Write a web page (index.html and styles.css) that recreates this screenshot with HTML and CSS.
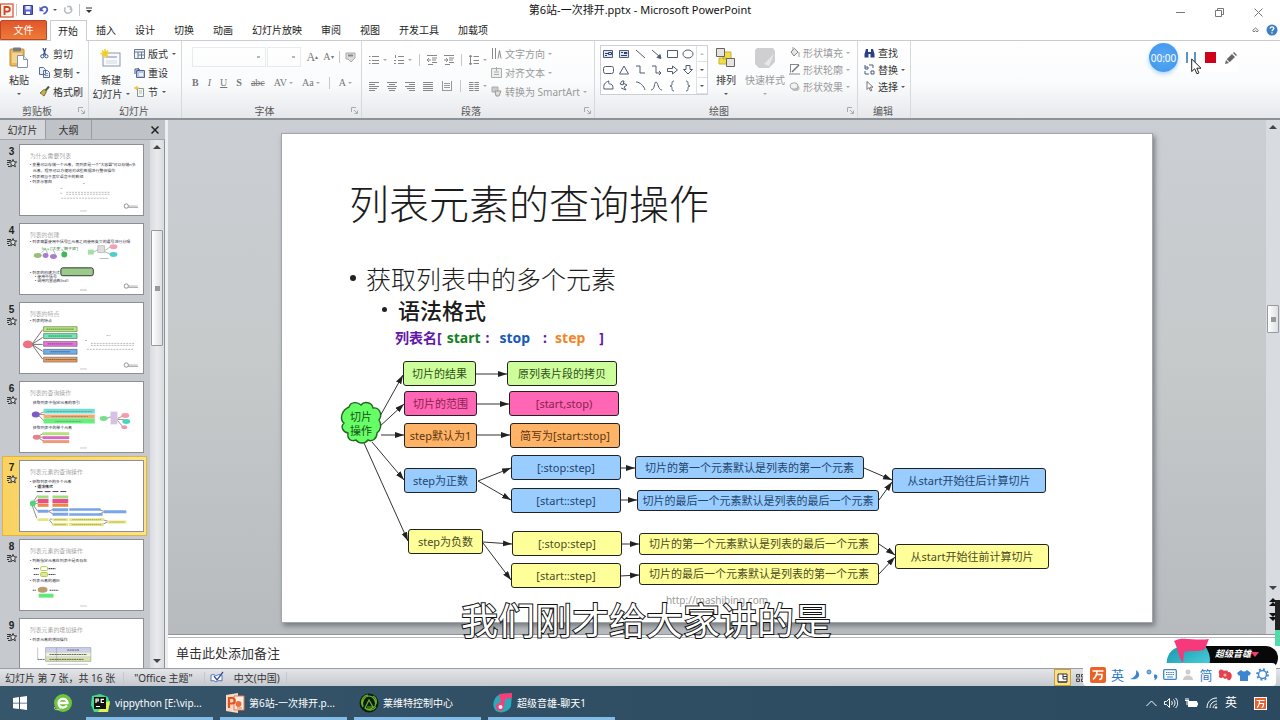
FILE: index.html
```html
<!DOCTYPE html>
<html lang="zh-CN">
<head>
<meta charset="utf-8">
<meta name="viewport" content="width=device-width, initial-scale=1">
<title>第6站-一次排开.pptx - Microsoft PowerPoint</title>
<link rel="stylesheet" href="styles.css">
</head>
<body>
<svg class="defs" aria-hidden="true">
  <symbol id="star" viewBox="0 0 10 9"><path d="M0 1.500h4M0 3.500h3M0 5.500h2M1 7.500h2" stroke="#333" fill="none"/><path d="M6 .5l1 2.300 2.600.2-2 1.800.7 3L6 6.300 3.700 7.800l.7-3-2-1.800L5 2.800z" fill="#ddd" stroke="#222" stroke-width=".9"/></symbol>
  <symbol id="launch" viewBox="0 0 7 7"><path d="M.5 5V.5H5M3 3l3 3M6.500 3.500v3h-3" fill="none" stroke="#aaa"/></symbol>
  <symbol id="logo" viewBox="0 0 16 6"><circle cx="3" cy="3" r="2.200" fill="none" stroke="#777" stroke-width=".8"/><path d="M5 4.500h10M5.500 3h9" stroke="#999" stroke-width=".8"/></symbol>
</svg>

<header class="titlebar">
  <div class="quick">
    <svg width="14" height="15" viewBox="0 0 14 15"><rect x=".5" y="1" width="12.500" height="13" fill="#fff4ef" stroke="#d0532f" stroke-width="1.200"/><path d="M4.500 12V4h3a2.200 2.200 0 010 4.700h-3" fill="none" stroke="#cf4420" stroke-width="1.800"/></svg>
    <i class="bar"></i>
    <button aria-label="保存"><svg width="10" height="10" viewBox="0 0 10 10"><path d="M.5.5h9v9h-9z" fill="#5a64c8" stroke="#3a3f95"/><path d="M2.500 1h5v3.500h-5z" fill="#e9ecff"/><path d="M3 6.500h4V9H3z" fill="#fff"/></svg></button>
    <button class="undo" aria-label="撤消"><svg width="10" height="10" viewBox="0 0 10 10"><path d="M2 4.500C3.500 1 8.500 1 8.300 4.600 8 7 6.500 8 4.500 9" fill="none" stroke="#4d5cc9" stroke-width="1.800"/><path d="M.5 1.500v4.800h4.700z" fill="#4d5cc9"/></svg><i class="dd"></i></button>
    <button aria-label="重复"><svg width="10" height="10" viewBox="0 0 10 10"><path d="M7.500 2a3.600 3.600 0 11-5 .3M7.500 5V1.500H4" fill="none" stroke="#b9bcc2" stroke-width="1.500"/></svg></button>
    <i class="bar"></i>
    <button aria-label="自定义快速访问工具栏"><svg width="6" height="7" viewBox="0 0 6 7"><path d="M0 1h6" stroke="#333"/><path d="M0 3h6L3 6z" fill="#333"/></svg></button>
  </div>
  <h1 class="wtitle">第6站-一次排开.pptx - Microsoft PowerPoint</h1>
  <div class="winbtns">
    <button aria-label="最小化"><svg width="9" height="9" viewBox="0 0 9 9"><path d="M0 4.500h9" stroke="#777"/></svg></button>
    <button aria-label="还原"><svg width="9" height="9" viewBox="0 0 9 9"><path d="M.5 2.500h6v6h-6zM2.500 2.500v-2h6v6h-2" fill="none" stroke="#777"/></svg></button>
    <button aria-label="关闭"><svg width="9" height="9" viewBox="0 0 9 9"><path d="M.5.5l8 8M8.500.5l-8 8" stroke="#777"/></svg></button>
  </div>
</header>

<nav class="tabs">
  <button class="file">文件</button>
  <button class="on">开始</button><button>插入</button><button>设计</button><button>切换</button><button>动画</button><button>幻灯片放映</button><button>审阅</button><button>视图</button><button>开发工具</button><button>加载项</button>
  <span class="help">
    <button aria-label="折叠功能区"><svg width="7" height="6" viewBox="0 0 7 6"><path d="M.7 3.500L3.500 1l2.800 2.500L5 5 3.500 3.600 2 5z" fill="#fff" stroke="#555" stroke-width=".8"/></svg></button>
    <button aria-label="帮助"><svg width="12" height="12" viewBox="0 0 12 12"><circle cx="6" cy="6" r="5.500" fill="#3f7fc0"/><path d="M4.200 4.600c0-2.300 3.700-2.200 3.600 0C7.800 5.700 6 5.800 6 7.300M6 8.300v1.200" fill="none" stroke="#fff" stroke-width="1.300"/></svg></button>
  </span>
</nav>

<section class="ribbon" aria-label="开始">
  <div class="group g-clip">
    <div class="gbody">
      <button class="big"><svg width="20" height="22" viewBox="0 0 20 22"><rect x="1" y="2" width="14" height="17" rx="1" fill="#e8b95a" stroke="#b98a36"/><rect x="4" y="0.500" width="8" height="4" rx="1" fill="#777b80"/><path d="M3 6h10v10H3z" fill="#f3d38e"/><path d="M8.500 8.500h6l4 4v8h-10z" fill="#fff" stroke="#7f93b8"/><path d="M14.500 8.500v4h4" fill="#dce6f6" stroke="#7f93b8"/></svg><span>粘贴</span><i class="dd"></i></button>
      <div class="stack">
        <button><svg width="11" height="11" viewBox="0 0 11 11"><path d="M4 0l2.500 7M7 0L4.500 7" stroke="#35518c" stroke-width="1.300"/><circle cx="3.300" cy="8.300" r="1.600" fill="none" stroke="#35518c"/><circle cx="7.400" cy="8.300" r="1.600" fill="none" stroke="#35518c"/></svg>剪切</button>
        <button><svg width="11" height="11" viewBox="0 0 11 11"><path d="M.5.500h4l2 2v5h-6zM4.500 3.500h4l2 2v5h-6z" fill="#eef3fb" stroke="#566c97"/><path d="M6 6.500h3M6 8.500h3" stroke="#7b95c4"/></svg>复制<i class="dd"></i></button>
        <button><svg width="11" height="11" viewBox="0 0 11 11"><path d="M10 .5L6.500 4.500" stroke="#4a5c3a" stroke-width="2"/><path d="M1 7l4-3.500 2.500 2L5 10C3 9.500 4 8 1 7z" fill="#c7b24b" stroke="#766f33"/></svg>格式刷</button>
      </div>
    </div>
    <div class="glabel">剪贴板<button class="launch" aria-label="剪贴板选项"><svg width="7" height="7"><use href="#launch"/></svg></button></div>
  </div>
  <div class="group g-slides">
    <div class="gbody">
      <button class="big"><svg width="22" height="20" viewBox="0 0 22 20"><rect x="3" y="4" width="17" height="13" fill="#f8fafd" stroke="#8c97ab"/><path d="M6 8h11" stroke="#b9c3d6" stroke-width="2"/><path d="M6 12h11M6 14h11" stroke="#d2d9e6"/><path d="M5 0v9M.5 4.500h9M2 1.500l6 6M8 1.500l-6 6" stroke="#f2cf28" stroke-width="1.500"/></svg><span>新建</span><span class="inl">幻灯片<i class="dd"></i></span></button>
      <div class="stack">
        <button><svg width="11" height="10" viewBox="0 0 11 10"><path d="M.5.500h10v9H.5zM.5 3h10M4 3v6.500M7.500 3v6.500M4 6h6.500" fill="#f3f6fa" stroke="#6b7993"/></svg>版式<i class="dd"></i></button>
        <button><svg width="11" height="10" viewBox="0 0 11 10"><path d="M2.500 2.500h8v7h-8z" fill="#b8c7df" stroke="#55688f"/><path d="M1 6V1h4M3.500 0L5.500 1.500 3.500 3" fill="none" stroke="#35518c"/><path d="M5 5h4v3H5z" fill="#edf2fa"/></svg>重设</button>
        <button><svg width="11" height="11" viewBox="0 0 11 11"><path d="M3.500 2.500h6v8h-6z" fill="#f6f6f2" stroke="#8d929c"/><path d="M5 5h3M5 7h3" stroke="#9ca"/><path d="M0 2h5M2.500 0v4" stroke="#edc93a" stroke-width="1.500"/></svg>节<i class="dd"></i></button>
      </div>
    </div>
    <div class="glabel">幻灯片</div>
  </div>
  <div class="group g-font off">
    <div class="gbody rows">
      <div class="row"><select class="fontname" aria-label="字体" disabled><option></option></select><select class="fontsize" aria-label="字号" disabled><option></option></select><button class="ser big-a">A<sup>▴</sup></button><button class="ser">A<sup>▾</sup></button><i class="bar"></i><button aria-label="清除格式"><svg width="11" height="11" viewBox="0 0 11 11"><path d="M1 1h9v5l-4 4-3-3H1z" fill="#ddd" stroke="#aaa"/><path d="M3 3.500h5" stroke="#888" stroke-width="2"/></svg></button></div>
      <div class="row marks"><button class="ser b">B</button><button class="ser it">I</button><button class="ser u">U</button><button class="ser b">S</button><button class="ser st">abc</button><button class="ser">AV<i class="dd"></i></button><button class="ser">Aa<i class="dd"></i></button><i class="bar"></i><button class="ser">A<i class="dd"></i></button></div>
    </div>
    <div class="glabel">字体<button class="launch" aria-label="字体选项"><svg width="7" height="7"><use href="#launch"/></svg></button></div>
  </div>
  <div class="group g-para off">
    <div class="gbody">
      <div class="rows">
        <div class="row">
          <button aria-label="项目符号"><svg width="10" height="10" viewBox="0 0 10 10"><path d="M3 1.500h7M3 5.500h7M3 8.500h7M0 1.500h1.500M0 5.500h1.500M0 8.500h1.500" stroke="#888"/></svg><i class="dd"></i></button>
          <button aria-label="编号"><svg width="10" height="10" viewBox="0 0 10 10"><path d="M4 1.500h6M4 5.500h6M4 8.500h6M1.500 0v3M0 5.500h2M0 8.500h2" stroke="#888"/></svg><i class="dd"></i></button>
          <i class="bar"></i>
          <button aria-label="减少缩进"><svg width="10" height="10" viewBox="0 0 10 10"><path d="M0 .5h10M5 3h5M5 5h4M5 7.500h5M1 9.500h5M4 5H0M2 3L0 5l2 2" stroke="#888" fill="none"/></svg></button>
          <button aria-label="增加缩进"><svg width="10" height="10" viewBox="0 0 10 10"><path d="M0 .5h10M5 3h5M5 5h4M5 7.500h5M1 9.500h5M0 5h4M2 3l2 2-2 2" stroke="#888" fill="none"/></svg></button>
          <i class="bar"></i>
          <button aria-label="行距"><svg width="10" height="10" viewBox="0 0 10 10"><path d="M4.500 1.500H10M4.500 5.500H10M4.500 8.500H10M1.500.500v9M0 2l1.500-2L3 2M0 8l1.500 2L3 8" stroke="#888" fill="none"/></svg><i class="dd"></i></button>
        </div>
        <div class="row">
          <button aria-label="左对齐"><svg width="10" height="9" viewBox="0 0 10 9"><path d="M0 .5h10M0 2.500h6M0 4.500h10M0 6.500h8M0 8.500h6" stroke="#888"/></svg></button>
          <button aria-label="居中"><svg width="10" height="9" viewBox="0 0 10 9"><path d="M0 .5h10M2 2.500h6M0 4.500h10M1 6.500h8M2 8.500h6" stroke="#888"/></svg></button>
          <button aria-label="右对齐"><svg width="10" height="9" viewBox="0 0 10 9"><path d="M0 .5h10M4 2.500h6M0 4.500h10M2 6.500h8M4 8.500h6" stroke="#888"/></svg></button>
          <button aria-label="两端对齐"><svg width="10" height="9" viewBox="0 0 10 9"><path d="M0 .5h10M0 2.500h10M0 4.500h10M0 6.500h10M0 8.500h10" stroke="#888"/></svg></button>
          <button aria-label="分散对齐"><svg width="10" height="10" viewBox="0 0 10 10"><path d="M.5 0v9M9.500 0v9M2 2.500h6M2 4.500h6M2 6.500h6M0 9.500h10" stroke="#999"/></svg></button>
          <i class="bar"></i>
          <button aria-label="分栏"><svg width="10" height="9" viewBox="0 0 10 9"><path d="M0 .5h4.500M5.500.5H10M0 2.500h4.500M5.500 2.500H10M0 4.500h4.500M5.500 4.500H10M0 6.500h4.500M5.500 6.500H10M0 8.500h4.500M5.500 8.500H10" stroke="#888"/></svg><i class="dd"></i></button>
        </div>
      </div>
      <div class="stack">
        <button><svg width="11" height="11" viewBox="0 0 11 11"><path d="M1.500 0v11M4.500 0v11M7 10.500l1.500-8 1.500 8" stroke="#888" fill="none"/></svg>文字方向<i class="dd"></i></button>
        <button><svg width="11" height="11" viewBox="0 0 11 11"><path d="M.5 1.500h10v9H.5zM3 5h5M3 7.500h5M5.500 0v4" stroke="#aaa" fill="#eee"/></svg>对齐文本<i class="dd"></i></button>
        <button><svg width="11" height="11" viewBox="0 0 11 11"><path d="M1 1h6v5H1z" fill="#ccc" stroke="#aaa"/><path d="M4 5h6l-2 5H5z" fill="#ddd" stroke="#999"/></svg>转换为 SmartArt<i class="dd"></i></button>
      </div>
    </div>
    <div class="glabel">段落<button class="launch" aria-label="段落选项"><svg width="7" height="7"><use href="#launch"/></svg></button></div>
  </div>
  <div class="group g-draw">
    <div class="gbody">
      <div class="shapes">
        <svg width="95" height="50" viewBox="0 0 95 50" fill="none" stroke="#4f5b73" role="img" aria-label="形状"><path d="M2.500 4.500h9v7h-9z" fill="#dfe6f2"/><path d="M4 9.500h2M4 7.500h3M7.500 6.500h3v2h-3z" stroke="#29406f"/><path d="M18.500 4.500h9v7h-9z" fill="#dfe6f2"/><path d="M20 6.500h2M23 6.500h3v1h-3M20 9.500h6" stroke="#29406f"/><path d="M35 4l9 8M51 4l8 7"/><path d="M60 12.500l-4-1 3-3z" fill="#4f5b73"/><path d="M66.500 4.500h10v7h-10z"/><ellipse cx="87" cy="8" rx="5" ry="4"/>
        <rect x="2.500" y="20.500" width="10" height="7" rx="2"/><path d="M23 20l4.500 8h-9zM35 20h4v7h5M51 20h4v7h5M58 25l2 2-2 2M66.500 22.500h5v-2.500l5 4-5 4v-2.500h-5zM85 19.500h4v4h2.500L87 28l-4.500-4.500H85z"/>
        <path d="M3 43c-1-4 1-7 5-8-1 3 0 3 2 3 2 1 2 3 2 5zM21 35l-2 3 3 1 1-4zM22 37l4 2-3 2 2 3-5-2M35 36c4 0 8 4 9 8M50 44c4 0 3-8 5-8s2 8 6 8M73 35c-4 0 0 5-4 5 4 0 0 5 4 5M85 35c4 0 0 5 4 5-4 0 0 5-4 5"/></svg>
        <div class="spin"><button aria-label="上一行"><i class="ua"></i></button><button aria-label="下一行"><i class="dd"></i></button><button aria-label="其他"><i class="dd"></i></button></div>
      </div>
      <button class="big arr"><svg width="22" height="22" viewBox="0 0 22 22"><path d="M8 5h8v7H8zM4 11h8v6H4z" fill="#f1dc4d" stroke="#c9b22a"/><path d="M1.500 1.500h8v8h-8zM11.500 11.500h8v8h-8z" fill="#e4e4e6" stroke="#6a6358"/></svg><span>排列</span><i class="dd"></i></button>
      <button class="big off qs"><svg width="22" height="22" viewBox="0 0 22 22"><path d="M3 1h16l2 3v11l-6 6H5l-4-4V3z" fill="#cfcfd1"/><path d="M10 17L20 7l-5 12z" fill="#e8e8e8"/></svg><span>快速样式</span><i class="dd"></i></button>
      <div class="stack tight off">
        <button><svg width="11" height="11" viewBox="0 0 11 11"><path d="M2 5l3.500-3.500L9 5l-4 4z" fill="#e5e5e5" stroke="#888"/><path d="M4 3V0M10 5v5" stroke="#999"/></svg>形状填充<i class="dd"></i></button>
        <button><svg width="11" height="11" viewBox="0 0 11 11"><path d="M1 .5h9M1.500.500v8M0 10h11" stroke="#888" fill="none"/><path d="M10 1L3 8" stroke="#777" stroke-width="1.500"/></svg>形状轮廓<i class="dd"></i></button>
        <button><svg width="11" height="11" viewBox="0 0 11 11"><ellipse cx="6.500" cy="7" rx="4" ry="3" fill="#bbb"/><ellipse cx="5" cy="5" rx="4" ry="3.200" fill="#f1f1f1" stroke="#aaa"/></svg>形状效果<i class="dd"></i></button>
      </div>
    </div>
    <div class="glabel">绘图<button class="launch" aria-label="绘图选项"><svg width="7" height="7"><use href="#launch"/></svg></button></div>
  </div>
  <div class="group g-edit">
    <div class="gbody">
      <div class="stack tight">
        <button><svg width="11" height="10" viewBox="0 0 11 10"><path d="M2 1h2v3h3V1h2l1.500 5v3.500h-4V6h-2v3.500H.5V6z" fill="#2c3f82"/></svg>查找</button>
        <button><svg width="11" height="11" viewBox="0 0 11 11"><path d="M1 1v4h3V3H1M7 10h3V7H7v3M5 1h4v3M1 7v3h4" fill="none" stroke="#4a5a86"/></svg>替换<i class="dd"></i></button>
        <button><svg width="11" height="11" viewBox="0 0 11 11"><path d="M3 .5v8l2-2 1.500 3.500 1.300-.6-1.500-3.200H9z" fill="#fff" stroke="#555" stroke-width=".8"/></svg>选择<i class="dd"></i></button>
      </div>
    </div>
    <div class="glabel">编辑</div>
  </div>
</section>

<main class="work">
  <aside class="side">
    <div class="sidetabs"><button class="on">幻灯片</button><button>大纲</button><button class="x" aria-label="关闭"><svg width="8" height="8" viewBox="0 0 8 8"><path d="M.5.500l7 7M7.500.5l-7 7" stroke="#222" stroke-width="1.500"/></svg></button></div>
    <div class="sidebody">
      <ol class="thumbs">
        <li><span class="num">3<svg width="10" height="9"><use href="#star"/></svg></span>
          <svg class="thumb" viewBox="0 0 125 71"><text class="tt" x="10" y="13">为什么需要列表</text><g class="tb"><text x="10" y="21">• 变量可以存储一个元素，而列表是一个“大容器”可以存储n多</text><text x="13" y="27">元素，程序可以方便地对这些数据进行整体操作</text><text x="10" y="33">• 列表相当于其它语言中的数组</text><text x="10" y="39">• 列表示意图</text></g><path d="M47 48h44M47 50h44M42 54h48M64 39h3M41 44h3M41 49h3" stroke="#bbb" stroke-dasharray="2 1"/><use href="#logo" x="105" y="59" width="16" height="6"/><path d="M61 67h7" stroke="#bbb" stroke-width=".8"/></svg></li>
        <li><span class="num">4<svg width="10" height="9"><use href="#star"/></svg></span>
          <svg class="thumb" viewBox="0 0 125 71"><text class="tt" x="10" y="13">列表的创建</text><g class="tb"><text x="10" y="19">• 列表需要使用中括号[],元素之间使用英文的逗号进行分隔</text><text x="10" y="51">• 列表的创建方式</text><text x="15" y="55">• 使用中括号</text><text x="15" y="59">• 调用内置函数list()</text></g><text x="22" y="26" font-size="4" fill="#347c46">lst = ['大圣', '娟子姐']</text><path d="M22 29l4-4M28 30l-2-5M36 31l-3-6M46 30l-4-5M74 29l7-4M86 27l6-4M86 28l7 3" stroke="#7a8" stroke-width=".7"/><ellipse cx="18" cy="32" rx="4" ry="2.500" fill="#9bbd77"/><ellipse cx="26" cy="32" rx="3" ry="2.500" fill="#aa7cce"/><ellipse cx="34" cy="33" rx="3.500" ry="2.500" fill="#aa7cce"/><ellipse cx="45" cy="31" rx="3" ry="3" fill="#3fb85a"/><path d="M69 26h6v5h-6z" fill="#a3dfa8"/><path d="M79 22h7v7h-7z" fill="#ddd" stroke="#999" stroke-width=".5"/><ellipse cx="95" cy="23" rx="4" ry="2.500" fill="#f0a1b5"/><ellipse cx="95" cy="31" rx="4" ry="2.500" fill="#4fcfcb"/><path d="M81 35h9M61 67h7" stroke="#aaa" stroke-width=".8"/><rect x="41.500" y="44.500" width="33" height="8" rx="2" fill="#9acb8a" stroke="#333"/><use href="#logo" x="105" y="60" width="16" height="6"/></svg></li>
        <li><span class="num">5<svg width="10" height="9"><use href="#star"/></svg></span>
          <svg class="thumb" viewBox="0 0 125 71"><text class="tt" x="10" y="13">列表的特点</text><text class="tb" x="10" y="19">• 列表的特点</text><path d="M12 42L23 27M12 42l11-7M12 42h11M12 42l11 7M12 42l11 15" stroke="#333" stroke-width=".7"/><ellipse cx="8" cy="42" rx="5" ry="4" fill="#ec7181"/><g stroke="#444" stroke-width=".5"><path d="M24 24h34v5H24z" fill="#b6ed70"/><path d="M24 31h34v5H24z" fill="#70e8ae"/><path d="M24 39h34v5H24z" fill="#ec72dc"/><path d="M24 47h34v5H24z" fill="#72ace9"/><path d="M24 55h34v5H24z" fill="#ee9e62"/></g><path d="M27 26.500h28M29 33.500h24M28 41.500h26M31 49.500h20M26 57.500h31" stroke="#245" stroke-width=".7" stroke-dasharray="1.500 .5"/><path d="M72 41h44M72 43h44M68 47h47M88 33h4M66 38h3" stroke="#bbb" stroke-dasharray="2 1"/><use href="#logo" x="105" y="60" width="16" height="6"/><path d="M61 67h7" stroke="#bbb" stroke-width=".8"/></svg></li>
        <li><span class="num">6<svg width="10" height="9"><use href="#star"/></svg></span>
          <svg class="thumb" viewBox="0 0 125 71"><text class="tt" x="10" y="13">列表的查询操作</text><g class="tb"><text x="13" y="22">获取列表中指定元素的索引</text><text x="13" y="48">获取列表中的单个元素</text></g><path d="M18 33l7-3M18 33h7M18 33l7 7M19 55l5-3M19 56h6M19 57l5 3M88 37l5-2M99 37l7-3M99 38h7M99 39l6 7" stroke="#765" stroke-width=".7"/><ellipse cx="16" cy="33" rx="4" ry="3" fill="#7e5bc4"/><path d="M24 27h52v5H24z" fill="#70ded6"/><path d="M24 33h52v4H24z" fill="#f1aa78"/><path d="M24 37h52v5H24z" fill="#67ef7d"/><path d="M27 30h46M32 35h37M36 40h27" stroke="#476" stroke-width=".6" stroke-dasharray="1 .5"/><ellipse cx="85" cy="37" rx="4" ry="2.500" fill="#79dc8b"/><path d="M92 30h7v13h-7z" fill="#d7c2e6"/><ellipse cx="107" cy="34" rx="4" ry="2.500" fill="#f49aab"/><ellipse cx="108" cy="40" rx="4" ry="2.500" fill="#45d7bd"/><ellipse cx="106" cy="46" rx="3" ry="2" fill="#ed9aa5"/><ellipse cx="17" cy="56" rx="4" ry="2.500" fill="#e87f8e"/><path d="M23 51h27v3H23z" fill="#b7df7b"/><path d="M23 55h27v3H23z" fill="#d46ac2"/><path d="M23 59h27v3H23z" fill="#ed9a79"/><path d="M61 67h7" stroke="#bbb" stroke-width=".8"/></svg></li>
        <li class="sel"><span class="num">7<svg width="10" height="9"><use href="#star"/></svg></span>
          <svg class="thumb" viewBox="0 0 125 71"><text class="tt" x="10" y="13">列表元素的查询操作</text><g class="tb"><text x="10" y="22">• 获取列表中的多个元素</text><text x="15" y="27" font-weight="bold">• 语法格式</text></g><path d="M17 31h30" stroke="#537" stroke-dasharray="6 2"/><path d="M13 42l5-7M13 42l5-2M13 43h5M13 44l5 7M12 44l5 14M29 51l5-2M29 51l5 3M30 59h3M30 60l4 5M79 49l6 2M80 54l5-2M82 59l7 2M82 65l7-3" stroke="#444" stroke-width=".6"/><circle cx="13" cy="43" r="3" fill="#4fd674"/><path d="M18 35h11v3H18zM33 35h16v3H33z" fill="#9cdf7f"/><path d="M18 38.500h11v4H18zM33 38.500h16v4H33z" fill="#eb4c90"/><path d="M18 43h11v3.500H18zM33 43h16v3.500H33z" fill="#ed8642"/><path d="M18 49.500h11v3H18zM33 48h16v3H33zM50 48h32v2.500H50zM33 52.500h16v3H33zM50 53h34v2.500H50zM85 50h23v3H85z" fill="#78a5e8"/><path d="M18 58h11v3H18zM33 58h16v3H33zM50 58h35v3H50zM33 63h16v3H33zM50 63h35v3H50zM89 60.500h19v3H89z" fill="#e5e77c"/><path d="M35 59.500h12M53 59.500h30M35 64.500h12M53 64.500h30M91 62h15" stroke="#885" stroke-width=".6" stroke-dasharray="1.500 .5"/></svg></li>
        <li><span class="num">8<svg width="10" height="9"><use href="#star"/></svg></span>
          <svg class="thumb" viewBox="0 0 125 71"><text class="tt" x="10" y="13">列表元素的查询操作</text><g class="tb"><text x="10" y="22">• 判断指定元素在列表中是否存在</text><text x="10" y="43">• 列表元素的遍历</text><path d="M14 29h5M29 29h7M14 35h5M29 35h7M13 51h3M30 51h9" stroke="#445" stroke-width="1.200" stroke-dasharray="1.500 .5"/></g><rect x="21" y="27" width="7" height="4" rx="1" fill="none" stroke="#b5c74a"/><rect x="21" y="33" width="7" height="4" rx="1" fill="#dbe99c" stroke="#b5c74a"/><ellipse cx="23" cy="50.500" rx="5" ry="3" fill="#bd9b6e"/><path d="M19 54.500h15v4H19z" fill="#62e77a"/><path d="M61 67h7" stroke="#bbb" stroke-width=".8"/></svg></li>
        <li><span class="num">9<svg width="10" height="9"><use href="#star"/></svg></span>
          <svg class="thumb" viewBox="0 0 125 71"><text class="tt" x="10" y="13">列表元素的增加操作</text><text class="tb" x="10" y="22">• 列表元素的增加操作</text><path d="M26 29h46v4H26z" fill="#cbd0ee"/><path d="M26 34h46v4H26z" fill="#eef4d8"/><path d="M26 39h46v4H26z" fill="#d6e6a2"/><path d="M26 29h46v14H26zM37 29v14M26 33.500h46M26 38.500h46M28 46h41M18 29v12" fill="none" stroke="#889" stroke-width=".5"/><path d="M48 31.500h12M30 36h38M30 41h35M18 41h7" stroke="#445" stroke-width=".8" stroke-dasharray="2 .5"/></svg></li>
      </ol>
      <div class="sb"><button aria-label="向上滚动"><i class="ub"></i></button><div class="sbthumb"></div><button class="end" aria-label="向下滚动"><i class="db"></i></button></div>
    </div>
  </aside>
  <section class="right">
    <div class="stage">
      <div class="desk">
        <article class="slide">
          <h2>列表元素的查询操作</h2>
          <ul class="bul">
            <li>获取列表中的多个元素
              <ul><li>语法格式</li></ul>
            </li>
          </ul>
          <p class="syntax"><span class="c1">列表名[</span><span class="c2">start</span><span class="c1 c5">:</span><span class="c3">stop</span><span class="c1 c6">:</span><span class="c4">step</span><span class="c1 c7">]</span></p>
          <div class="diagram">
            <svg class="wires" viewBox="0 0 710 240">
              <defs><marker id="a" markerWidth="10" markerHeight="8" refX="9" refY="3" orient="auto" markerUnits="userSpaceOnUse"><path d="M0 0l9 3-9 3z" fill="#222"/></marker></defs>
              <g class="wire">
                <path d="M38 64L62 21"/><path d="M37 74L63 50"/><path d="M40 81H63"/><path d="M31 88L63 126"/><path d="M23 89L67 187"/>
                <path d="M135 20h31"/><path d="M136 50h32"/><path d="M136 81h33"/>
                <path d="M137 127l33-13"/><path d="M137 127l33 19"/><path d="M142 188l29 2"/><path d="M142 189l28 37"/>
                <path d="M279 114h15"/><path d="M279 146h17"/><path d="M281 190h17"/><path d="M279 222l19-1"/>
                <path d="M523 114l28 12"/><path d="M538 146l13-18"/><path d="M538 190l16 11"/><path d="M538 220l16-17"/>
              </g>
              <path d="M8 53C10 47 17 48 20 51C23 47 31 48 32 54C38 53 42 60 38 66C41 70 40 76 36 79C36 85 31 88 27 86C24 90 18 90 15 86C10 88 6 85 7 79C2 78 -1 73 3 69C-2 65 1 56 8 53Z" fill="#66ff66" stroke="#226622" stroke-width="1.400"/>
            </svg>
            <div class="cloud">切片<br>操作</div>
            <div class="n g n1">切片的结果</div><div class="n g n2">原列表片段的拷贝</div>
            <div class="n p n3">切片的范围</div><div class="n p n4">[start,stop)</div>
            <div class="n o n5">step默认为1</div><div class="n o n6">简写为[start:stop]</div>
            <div class="n b n7">step为正数</div><div class="n b n8">[:stop:step]</div><div class="n b n9">[start::step]</div>
            <div class="n y n10">step为负数</div><div class="n y n11">[:stop:step]</div><div class="n y n12">[start::step]</div>
            <div class="n b n13">切片的第一个元素默认是列表的第一个元素</div><div class="n b n14">切片的最后一个元素默认是列表的最后一个元素</div>
            <div class="n y n15">切片的第一个元素默认是列表的最后一个元素</div><div class="n y n16">切片的最后一个元素默认是列表的第一个元素</div>
            <div class="n b n17">从start开始往后计算切片</div><div class="n y n18">从start开始往前计算切片</div>
          </div>
          <footer class="url">http://mashibing.com</footer>
        </article>
      </div>
      <div class="sb main"><button aria-label="向上滚动"><i class="ub"></i></button><div class="sbthumb"></div><button class="end" aria-label="向下滚动"><i class="db"></i></button><button aria-label="上一张幻灯片"><svg width="8" height="9" viewBox="0 0 8 9"><path d="M4 0l4 4H0zM4 4l4 4H0z" fill="#111"/></svg></button><button aria-label="下一张幻灯片"><svg width="8" height="9" viewBox="0 0 8 9"><path d="M4 5L0 1h8zM4 9L0 5h8z" fill="#111"/></svg></button></div>
    </div>
    <div class="notes">单击此处添加备注</div>
  </section>
</main>

<div class="status">
  <span class="s1">幻灯片 第 7 张，共 16 张</span><i class="bar"></i><span class="s2">"Office 主题"</span><i class="bar"></i>
  <svg width="14" height="13" viewBox="0 0 14 13"><path d="M1 4c3-1 4 0 5 1 1-1 3-2 6-1v6c-3-1-5 0-6 1-1-1-3-2-5-1z" fill="#fff" stroke="#5b73b5"/><path d="M4 5l3 4 6-8" fill="none" stroke="#3a4fa0" stroke-width="1.300"/></svg>
  <span class="s3">中文(中国)</span><i class="bar"></i>
  <div class="views"><button class="on" aria-label="普通视图"><svg width="11" height="10" viewBox="0 0 11 10"><path d="M1 1h9v8H1zM6 1v5M6 6h4M6 3.500h4M1 9h9" fill="#fff" stroke="#333"/></svg></button><button aria-label="幻灯片浏览"><svg width="9" height="8" viewBox="0 0 9 8"><path d="M.5.500h3v2.500h-3zM5.500.500h3v2.500h-3zM.5 5h3v2.500h-3zM5.500 5h3v2.500h-3z" fill="none" stroke="#444"/></svg></button></div>
</div>

<nav class="taskbar">
  <button class="start" aria-label="开始"><svg width="14" height="14" viewBox="0 0 14 14" fill="#fff"><path d="M0 2l6-.9v5.600H0zM7 1l7-1v6.700H7zM0 7.500h6v5.600L0 12.200zM7 7.500h7V14l-7-1z"/></svg></button>
  <button class="ie" aria-label="浏览器"><svg width="20" height="20" viewBox="0 0 20 20"><circle cx="10" cy="10" r="9" fill="#6ec43c"/><path d="M5.500 10h9c0-5.500-9-5.500-9 0s6 5.500 8.500 2.500" fill="none" stroke="#fff" stroke-width="2.300"/><path d="M2 14C0 18 6 17 9 15" fill="none" stroke="#bfe89b"/></svg></button>
  <button class="task"><svg width="20" height="20" viewBox="0 0 20 20"><path d="M1 3l8-2 8 3 2 7-4 8H3L0 12z" fill="#3ddc84"/><path d="M12 10l7-2-2 11H7z" fill="#e5f04e"/><path d="M3 4h12v12H3z" fill="#111"/><path d="M5 10V6h2.200v2H5M13 6.300h-2.800v3.200H13M5 13.500h4" fill="none" stroke="#fff" stroke-width="1.200"/></svg><span>vippython [E:\vip...</span></button>
  <button class="task"><svg width="20" height="20" viewBox="0 0 20 20"><path d="M1 2l12-2v20L1 18z" fill="#fbd9c8"/><path d="M9 3h10v14H9z" fill="#fff0e6" stroke="#e9764a"/><path d="M4 15V5h3a2.700 2.700 0 010 5.500H4" fill="none" stroke="#e2521d" stroke-width="2.200"/><circle cx="13.500" cy="11" r="3" fill="#e86b3a"/><path d="M12 15h5" stroke="#e86b3a"/></svg><span>第6站-一次排开.p...</span></button>
  <button class="task"><svg width="20" height="20" viewBox="0 0 20 20"><circle cx="10" cy="10" r="9.500" fill="#101a10"/><path d="M4 14C2 8 6 3 10 3s8 5 6 10c-2 3-7 4-10 2l4-8 4 7H8M4 14c-3-5-1-11 5-12M16 13c3-4 1-9-2-10M6 15c3 3 8 3 11-1" fill="none" stroke="#62b52c" stroke-width="1.200"/></svg><span>莱维特控制中心</span></button>
  <button class="task"><svg width="20" height="20" viewBox="0 0 20 20"><path d="M3 4C6 0 14 0 19 1l-1 12c-2 6-10 8-15 5C-1 13 0 8 3 4z" fill="#2aa9b8"/><path d="M6 1l13-1v5l-7 1-1 8a4 4 0 11-3-4z" fill="#fb3d77"/><circle cx="7.500" cy="14" r="2" fill="#d9f6f7"/></svg><span>超级音雄-聊天1</span></button>
  <div class="tray">
    <button aria-label="显示隐藏的图标"><svg width="11" height="11" viewBox="0 0 11 11"><path d="M.5 8l5-5 5 5" fill="none" stroke="#fff"/></svg></button>
    <button aria-label="音量"><svg width="14" height="12" viewBox="0 0 14 12" fill="none" stroke="#fff"><path d="M.5 4.500h2l3-3v9l-3-3h-2zM7.500 4c1 1 1 3 0 4M9.500 2.500c2 2 2 5 0 7M11.500 1c3 3 3 7 0 10"/></svg></button>
    <button aria-label="电池"><svg width="14" height="10" viewBox="0 0 14 10"><path d="M3 3h9v6H3z" fill="#fff"/><path d="M12.500 4.500v3M1 0v2M3 0v2M0 2.500h4M2 3v4" stroke="#fff"/></svg></button>
    <button aria-label="网络"><svg width="12" height="12" viewBox="0 0 12 12" fill="none" stroke="#fff"><path d="M1 11C1 5 5 1 11 1M4 11c0-4 3-7 7-7M7 11c0-2 2-4 4-4"/><circle cx="10" cy="10.500" r=".8" fill="#fff"/></svg></button>
    <button class="lang">英</button>
    <button aria-label="输入法"><svg width="13" height="13" viewBox="0 0 13 13"><path d="M0 0h13v13H0z" fill="#fff"/><path d="M1 1h11v11H1z" fill="#e9602f"/><path d="M2.500 3.500h8M5.500 3.500C5.500 7 5 9 3 10.500M5.500 6.500h4c0 3-.5 4-2 4" fill="none" stroke="#fff" stroke-width="1.200"/></svg></button>
  </div>
</nav>

<div class="caption">我们刚才给大家讲的是</div>

<div class="rec">
  <span class="clock">00:00</span>
  <button aria-label="暂停"><svg width="10" height="11" viewBox="0 0 10 11"><path d="M1 0v11M9 0v11" stroke="#2a72a8" stroke-width="1.500"/></svg></button>
  <button aria-label="停止"><svg width="11" height="11" viewBox="0 0 11 11"><path d="M0 0h11v11H0z" fill="#d0021b"/></svg></button>
  <button aria-label="画笔"><svg width="12" height="12" viewBox="0 0 12 12"><path d="M0 12l1-4 3 3zM1.700 7.300L7 2l3 3-5.300 5.300zM8 1l1-1 3 3-1 1z" fill="#666"/></svg></button>
</div>
<svg class="cursor" width="11" height="17" viewBox="0 0 11 17"><path d="M.7 1v12.500l3-2.700 2.200 5 2-.9-2.100-4.700H10z" fill="#fff" stroke="#222"/></svg>

<div class="meter"></div>
<div class="pill">
  <svg width="48" height="32" viewBox="0 0 48 32"><defs><linearGradient id="tq" x2="1" y2="1"><stop stop-color="#1796ac"/><stop offset="1" stop-color="#4fd5e0"/></linearGradient></defs><path d="M2 30C0 16 8 9 18 8h22c6 8 6 16 3 24H2z" fill="url(#tq)"/><path d="M9 3c8-5 20 0 35-2-2 4-3 9-5 11-9 2-15 0-20 2l-1 11C13 19 13 10 9 3z" fill="#f5397a"/></svg>
  <span>超级音雄</span><i></i>
</div>
<div class="ime">
  <button aria-label="输入法菜单"><svg width="16" height="16" viewBox="0 0 16 16"><rect width="16" height="16" rx="2" fill="#ec6226"/><path d="M2.500 4h11M7 4c0 4-1 6-4 8.500M6.500 7.500H12c0 4-.5 5-3 5" fill="none" stroke="#fff" stroke-width="1.600"/></svg></button>
  <button class="t">英</button>
  <button aria-label="半角"><svg width="12" height="12" viewBox="0 0 12 12"><path d="M7 1c6 4 3 11-6 9 4-1 7-4 6-9z" fill="#3d85cf"/></svg></button>
  <button aria-label="标点"><svg width="12" height="12" viewBox="0 0 12 12"><circle cx="3" cy="3" r="2" fill="#7fb2e6" stroke="#3d85cf"/><path d="M8 5.500c5-1 4 5 0 6 1-2 1-2 0-3z" fill="#3d85cf"/></svg></button>
  <button aria-label="软键盘"><svg width="14" height="11" viewBox="0 0 14 11"><rect x=".7" y=".7" width="12.600" height="9.600" rx="1" fill="none" stroke="#3d85cf" stroke-width="1.300"/><path d="M3 3.500h8M3 5.500h8" stroke="#3d85cf" stroke-dasharray="1.500 .7"/><path d="M4 8h6" stroke="#3d85cf"/></svg></button>
  <button aria-label="用户"><svg width="12" height="12" viewBox="0 0 12 12"><circle cx="6" cy="3" r="2.500" fill="#ccc"/><path d="M1 11c0-6 10-6 10 0z" fill="#ccc"/></svg></button>
  <button class="t">简</button>
  <button aria-label="活动"><svg width="14" height="12" viewBox="0 0 14 12"><path d="M1 2c2-3 4-1 5 0 3-1 4 0 4 1 4-1 5 5 2 8-2 1-3-1-3-2-2 2-4 0-4-1-1 2-5 1-4-1 1-2-1-3 0-5z" fill="#e04450"/><circle cx="7" cy="6" r="1.500" fill="#f9b6a8"/></svg></button>
  <button aria-label="皮肤"><svg width="14" height="12" viewBox="0 0 14 12"><path d="M4 1c2 2 4 2 6 0l4 3-2 3-1-1v6H3V6L2 7 0 4z" fill="#3d85cf"/></svg></button>
  <button aria-label="设置"><svg width="13" height="13" viewBox="0 0 13 13"><circle cx="6.500" cy="6.500" r="4" fill="none" stroke="#3d85cf" stroke-width="1.500"/><circle cx="6.500" cy="6.500" r="5.500" fill="none" stroke="#3d85cf" stroke-width="1.700" stroke-dasharray="2 2.300"/></svg></button>
</div>
</body>
</html>
```
FILE: styles.css
```css
*{box-sizing:border-box}
body{margin:0;min-height:100vh;height:100vh;display:flex;flex-direction:column;overflow:hidden;position:relative;font:10px/14px "Noto Sans","Noto Sans CJK SC",sans-serif;color:#333;background:#fff}
button{font:inherit;color:inherit;background:none;border:0;padding:0;margin:0;display:flex;align-items:center;white-space:nowrap}
svg{flex:none}
h1,h2,p,ul,ol{margin:0;padding:0;font-weight:inherit}
ul,ol{list-style:none}
.defs{display:none}
.bar{width:1px;height:12px;background:#c4c7cb;flex:none}
.dd{border:2px solid transparent;border-top-color:#555;border-bottom:0;margin-left:4px;width:0;height:0;flex:none}
.ua{border:2px solid transparent;border-bottom-color:#bbb;border-top:0}
.off{color:#999}
.off .dd{border-top-color:#aaa}

.titlebar{display:grid;grid-template-columns:1fr auto 1fr;align-items:center;height:20px}
.quick{display:flex;align-items:center;gap:6px}
.quick .bar:nth-child(2){margin-left:-4px}
.wtitle{font-size:11px;color:#111}
.winbtns{display:flex;justify-content:flex-end;gap:30px;padding:4px 17px 0 0}

.tabs{display:flex;align-items:stretch;height:21px;border-bottom:1px solid #c9ccd1;font-size:10px;color:#222}
.tabs button{padding:0 10px 0 9px}
.tabs .file{width:47px;justify-content:center;background:linear-gradient(#e0562d,#ee7b36);color:#fff;border:1px solid #bd4624;border-radius:2px 2px 0 0;margin-right:3px;padding:0}
.tabs .on{background:#fff;border:1px solid #c9ccd1;border-bottom:0;margin-bottom:-1px;padding:0 8px 0 7px}
.tabs .help{margin-left:auto;display:flex;gap:7px;padding-right:2px}
.tabs .help button{padding:0}

.ribbon{display:flex;flex:none;height:79px;background:linear-gradient(#fff,#fafbfc 55%,#e6e8ec);border-bottom:2px solid #8d9198}
.group{display:flex;flex-direction:column;border-right:1px solid #d5d8dc;flex:none}
.g-clip{width:89px}.g-slides{width:93px}.g-font{width:180px}.g-para{width:233px}.g-draw{width:263px}.g-edit{width:53px}
.gbody{display:flex;flex:1;padding-top:3px;min-height:0}
.glabel{display:flex;justify-content:center;align-items:center;height:15px;color:#555;position:relative;padding-right:14px}
.g-edit .glabel,.g-slides .glabel{padding-right:2px}
.launch{position:absolute;right:3px;top:4px}
.stack{display:flex;flex-direction:column}
.stack button{height:19px;gap:4px}
.stack .dd{margin-left:0}
.stack.tight button{height:17px;gap:3px}
.big{flex-direction:column;gap:0}
.big svg{margin:3px 0 4px}
.big .dd{margin:6px 0 0}
.big .inl{display:flex;align-items:center}
.big .inl .dd{margin:0 0 0 3px}
.g-clip .big{width:38px}
.g-slides .big{width:44px}
.g-slides .big svg{margin:5px 0 4px}
.g-slides .stack button{gap:3px}
.g-clip .stack button{gap:3px}
.g-clip .stack,.g-slides .stack{padding-left:1px}
.g-slides .stack .dd{margin-left:1px}
.rows{display:flex;flex-direction:column;gap:6px}
.row{display:flex;align-items:center;justify-content:space-between;height:20px}
.g-font .rows{padding:6px 5px 0 10px}
.marks{padding-right:4px}
select{appearance:none;background:linear-gradient(#999,#999) no-repeat right 5px center/3px 2px;border:1px solid #e1e3e6;height:20px;padding:0}
.fontname{width:74px}.fontsize{width:34px;margin-left:-4px}
.ser{font-family:"Liberation Serif",serif;color:#777}
.big-a{font-size:12px}
.ser sup{font-size:6px;line-height:1}
.ser .dd{margin-left:2px}
.b{font-weight:bold}.it{font-style:italic}.u{text-decoration:underline}.st{text-decoration:line-through}
.g-para .rows{width:125px;padding:6px 0 0 7px}
.g-para .stack{padding-left:4px}
.g-para .stack button{gap:3px}
.shapes{display:flex;margin:1px 0 8px 5px;border:1px solid #ccd0d6;background:#fff}
.spin{display:flex;flex-direction:column;border-left:1px solid #dde0e4;width:11px}
.spin button{flex:1;justify-content:center;border-bottom:1px solid #dde0e4}
.spin .dd{margin:0}
.arr{width:36px}.qs{width:42px}
.g-draw .stack{padding-left:3px}
.g-edit .stack{padding-left:6px}

.work{flex:1;display:flex;min-height:0}
.side{width:168px;flex:none;display:flex;flex-direction:column;background:#c6c9ce;border-right:3px solid #eceef0;box-shadow:inset -1px 0 #8e9299}
.sidetabs{display:flex;height:20px;border-bottom:1px solid #a3a7ad;background:#bfc2c7}
.sidetabs button{width:46px;justify-content:center;border-right:1px solid #999da3}
.sidetabs .on{background:#d5d7db}
.sidetabs .x{margin-left:auto;width:20px;border:0}
.sidebody{flex:1;display:flex;min-height:0;overflow:hidden}
.thumbs{flex:1;overflow:hidden;padding:0 3px 0 2px}
.thumbs li{display:flex;padding:3px 2px 3px 1px;border:1px solid transparent;margin-bottom:-1px;height:80px}
.thumbs li.sel{background:linear-gradient(90deg,#f9d262,#fbe38c);border-color:#e0b53a}
.num{width:15px;display:flex;flex-direction:column;align-items:center;font:bold 10px/15px "Liberation Sans",sans-serif;color:#222}
.thumb{flex:1;min-width:0;height:72px;background:#fff;border:1px solid #8c9096}
.tt{font-size:6px;font-weight:300;fill:#777}
.tb{font-size:4px;fill:#334}
.sb{width:14px;display:flex;flex-direction:column;align-items:center;background:linear-gradient(90deg,#d9dbdf,#e8eaec,#d9dbdf);margin-right:1px}
.sb button{height:14px;justify-content:center}
.ub,.db{border:4px solid transparent;width:0;height:0}
.ub{border-bottom-color:#444;border-top:0}.db{border-top-color:#444;border-bottom:0}
.sbthumb{width:12px;height:116px;margin-top:76px;border:1px solid #9599a0;border-radius:1px;background:linear-gradient(#999,#999) center/5px 5px no-repeat,linear-gradient(90deg,#fff,#dcdfe3)}
.end{margin-top:auto}
.right{flex:1;display:flex;flex-direction:column;min-width:0}
.stage{flex:1;display:flex;min-height:0;border-bottom:1px solid #8f949a;background:linear-gradient(#cbced3,#c6cacb 45%,#b7bbbe)}
.desk{flex:1;display:flex;justify-content:center;align-items:flex-start;padding-top:13px;min-width:0;overflow:hidden}
.slide{flex:0 1 872px;background:#fff;border:1px solid #a2a5a9;padding:38px 59px 15px;box-shadow:2px 3px 5px #777c82;color:#1c1c1c}
.slide h2{font-size:40px;line-height:60px;font-weight:300;padding-left:8px;margin-bottom:28px;font-family:"Noto Sans CJK SC",sans-serif}
.bul{font:300 25px/36px "Noto Sans CJK SC",sans-serif}
.bul li{padding-left:25px}
.bul li::before{content:"";float:left;width:6px;height:6px;border-radius:3px;background:#222;margin:15px 0 0 -16px}
.bul ul{font-size:22px;line-height:26px;font-weight:500}
.bul ul li{padding-left:32px}
.bul ul li::before{width:5px;height:5px;margin-top:11px}
.syntax{display:flex;font:bold 14px/32px "Noto Sans","Noto Sans CJK SC",sans-serif;padding-left:54px;white-space:nowrap}
.c1{color:#6217a8}.c2{color:#138021;margin-left:5px}.c3{color:#1559ba;margin-left:10px}.c4{color:#f28527;margin-left:8px}
.c5{margin-left:5px}.c6{margin-left:13px}.c7{margin-left:14px}
.diagram{position:relative;height:239px;font-size:11px;line-height:14px;width:710px}
.wires{width:710px;height:240px;display:block;overflow:visible}
.wire{stroke:#333;stroke-width:1;fill:none}
.wire path{marker-end:url(#a)}
.cloud{position:absolute;left:0;top:56px;width:40px;text-align:center;color:#174f17}
.n{position:absolute;display:flex;align-items:center;justify-content:center;border:1px solid #222;border-radius:3px;white-space:nowrap;height:25px;width:110px}
.g{background:#ccff99;color:#314f1d}.p{background:#ff66b3;color:#8a1f51}.o{background:#ffb366;color:#5c3512}.b.n{background:#99ccff;color:#1f466d;font-weight:normal}.y{background:#ffff99;color:#4b4b24}
.n1{left:62px;top:7px;width:73px}.n2{left:166px;top:7px}
.n3{left:63px;top:37px;width:73px}.n4{left:168px;top:37px}
.n5{left:63px;top:69px;width:73px}.n6{left:169px;top:69px}
.n7{left:63px;top:114px;width:73px}.n8{left:170px;top:101px}.n9{left:170px;top:134px}
.n10{left:67px;top:175px;width:75px}.n11{left:171px;top:177px}.n12{left:170px;top:209px}
.n13{left:294px;top:102px;width:229px;height:23px}.n14{left:296px;top:136px;width:242px;height:21px}
.n15{left:298px;top:179px;width:240px;height:22px}.n16{left:298px;top:209px;width:240px;height:22px}
.n17{left:551px;top:114px;width:154px}.n18{left:554px;top:190px;width:154px}
.url{text-align:center;color:#999;font-size:10px;line-height:14px}
.sb.main{margin:0;background:#d8dbdf;padding-bottom:11px}
.main .sbthumb{height:28px;margin-top:171px}
.notes{height:31px;padding:5px 8px;background:#fff;border-top:1px solid #b6babf;margin-top:2px;font-size:13px;line-height:20px;color:#333}

.status{display:flex;align-items:center;height:18px;flex:none;padding-left:5px;background:linear-gradient(#e3e5e8,#c6c9ce);border-top:1px solid #9a9ea4;font-size:10px;line-height:16px}
.status .s1{margin-right:8px}
.s2{margin:0 11px 0 10px}.status svg{margin-left:5px}.s3{margin:0 6px 0 10px}
.views{margin-left:auto;display:flex;gap:3px;padding-right:193px}
.views button{height:17px}
.views svg{margin:0 2px}
.views .on{background:#fbe08a;border:1px solid #c9a33a}

.taskbar{display:flex;align-items:stretch;height:34px;flex:none;background:linear-gradient(90deg,#36566c,#2e4c62 60%,#2c4a5f);color:#fff;font-size:10px}
.start{width:40px;justify-content:center}
.ie{width:46px;justify-content:center}
.task{width:127px;margin-right:7px;border-bottom:3px solid #83bce6;gap:4px;padding:3px 0 0 5px}
.tray{margin-left:auto;display:flex;align-items:center;gap:7px;padding-right:13px}
.lang{font-size:12px}
.tray button:last-child{margin-left:10px}

.caption{position:absolute;left:0;right:0;bottom:79px;padding-left:12px;text-align:center;font:400 37px/44px "Noto Sans CJK SC",sans-serif;color:#fff;-webkit-text-stroke:2px #111;paint-order:stroke fill;pointer-events:none}
.rec{position:absolute;right:42px;top:43px;display:flex;align-items:center;gap:8px;background:#fff}
.rec button{margin-right:1px}
.clock{width:29px;height:29px;border-radius:50%;background:radial-gradient(#5ba8f2,#3c95ee);color:#fff;display:flex;align-items:center;justify-content:center;font-size:10px;box-shadow:0 2px 4px #a9d3f7}
.cursor{position:absolute;right:78px;top:58px}
.meter{position:absolute;right:0;bottom:74px;width:5px;height:46px;background:linear-gradient(#222 65%,#55dba9 65%)}
.pill{position:absolute;right:2px;bottom:50px;display:flex;align-items:center;height:32px}
.pill::before{content:"";position:absolute;inset:8px 0 0 24px;background:#080808;border-radius:0 12px 12px 0}
.pill svg,.pill span,.pill i{position:relative}
.pill span{color:#fff;font:italic bold 9px/14px "Noto Sans CJK SC",sans-serif;padding-left:2px}
.pill i{border:4px solid transparent;border-top:5px solid #f5397a;border-bottom:0;margin:0 19px 0 0}
.ime{position:absolute;right:4px;bottom:34px;display:flex;align-items:center;justify-content:space-between;width:193px;height:23px;padding:0 7px;background:#fff;border-radius:4px}
.t{color:#2d75c4;font-size:13px;line-height:18px}
```
